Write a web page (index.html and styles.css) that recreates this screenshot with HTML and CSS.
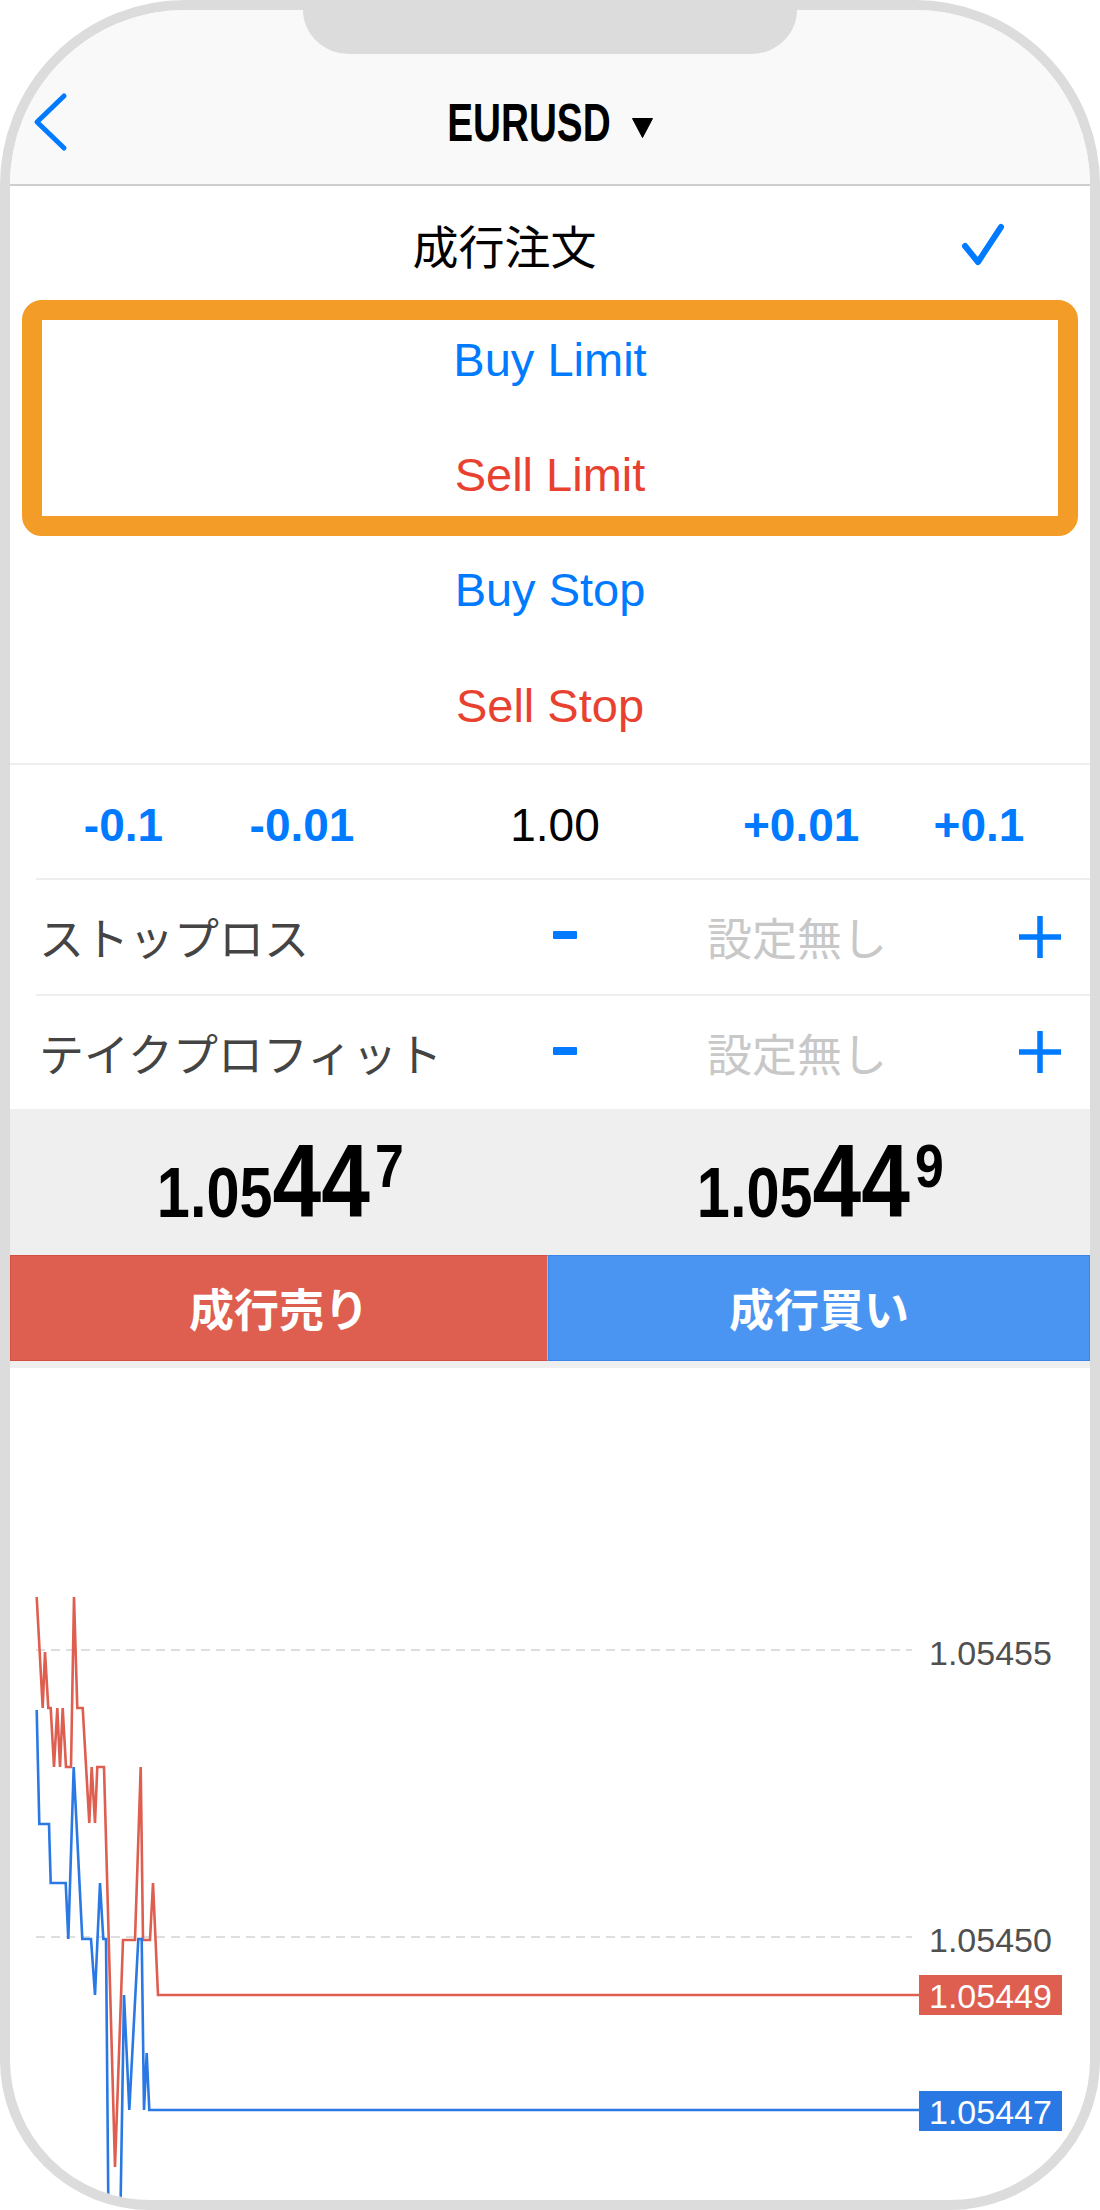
FILE: index.html
```html
<!DOCTYPE html>
<html lang="ja">
<head>
<meta charset="utf-8">
<title>EURUSD 注文</title>
<link rel="stylesheet" href="styles.css">
</head>
<body>
<div class="phone">
  <div class="notch"></div>
  <header class="nav">
    <span class="back">
      <svg width="36" height="60" viewBox="0 0 36 60"><polyline points="32,4 5,30 32,56" fill="none" stroke="#007aff" stroke-width="5" stroke-linecap="round" stroke-linejoin="round"/></svg>
    </span>
    <div class="title">
      <span class="symbol">EURUSD</span>
      <svg class="caret" width="21" height="20" viewBox="0 0 21 20"><polygon points="0.5,0.5 20.5,0.5 10.5,19.5" fill="#000" stroke="#000" stroke-width="1" stroke-linejoin="round"/></svg>
    </div>
    <span></span>
  </header>

  <div class="types">
    <div class="type-row market">
      <span class="market-label">成行注文</span>
      <svg class="check" width="52" height="52" viewBox="0 0 52 52"><polyline points="7,28 20,44 43,9" fill="none" stroke="#007aff" stroke-width="6" stroke-linecap="round" stroke-linejoin="round"/></svg>
    </div>
    <div class="type-row buy">Buy Limit</div>
    <div class="type-row sell">Sell Limit</div>
    <div class="type-row buy">Buy Stop</div>
    <div class="type-row sell">Sell Stop</div>
    <div class="highlight"></div>
  </div>

  <div class="lots">
    <span class="step">-0.1</span>
    <span class="step">-0.01</span>
    <span class="lot-value">1.00</span>
    <span class="step">+0.01</span>
    <span class="step last">+0.1</span>
  </div>

  <div class="level">
    <span class="level-name">ストップロス</span>
    <span class="minus" aria-label="-"></span>
    <span class="unset">設定無し</span>
    <svg class="plus" width="42" height="42" viewBox="0 0 42 42"><path d="M21 0V42M0 21H42" stroke="#007aff" stroke-width="5.5"/></svg>
  </div>
  <div class="level second">
    <span class="level-name">テイクプロフィット</span>
    <span class="minus" aria-label="-"></span>
    <span class="unset">設定無し</span>
    <svg class="plus" width="42" height="42" viewBox="0 0 42 42"><path d="M21 0V42M0 21H42" stroke="#007aff" stroke-width="5.5"/></svg>
  </div>

  <div class="quotes">
    <div class="quote"><span class="price"><span class="q-small">1.05</span><span class="q-big">44</span><span class="q-sup">7</span></span></div>
    <div class="quote"><span class="price"><span class="q-small">1.05</span><span class="q-big">44</span><span class="q-sup">9</span></span></div>
  </div>

  <div class="actions">
    <button class="sell-btn">成行売り</button>
    <button class="buy-btn">成行買い</button>
  </div>

  <div class="chart">
    <svg width="1080" height="832" viewBox="10 1368 1080 832">
      <g stroke="#dedede" stroke-width="2" stroke-dasharray="9 6">
        <line x1="36" y1="1650" x2="912" y2="1650"/>
        <line x1="36" y1="1937" x2="912" y2="1937"/>
      </g>
      <text class="axis" x="929" y="1665">1.05455</text>
      <text class="axis" x="929" y="1952">1.05450</text>
      <polyline fill="none" stroke="#de5e50" stroke-width="2.6" stroke-linejoin="miter"
        points="36.7,1597 42.7,1708 45,1652 48.3,1708 50.7,1708 54,1767 57.3,1708 60,1767 62.7,1708 66,1767 71,1767 74,1597 77.3,1708 82.7,1708 89.3,1823 91.7,1767 95,1823 97.3,1767 104,1767 115,2167 123,1940 135,1940 140.7,1767 143,1940 150,1940 153,1883 158,1995 920,1995"/>
      <polyline fill="none" stroke="#2a78e4" stroke-width="2.6" stroke-linejoin="miter"
        points="36.7,1710 39.3,1824 49,1824 50.7,1883 65.7,1883 68.3,1939 73.7,1767 82.3,1939 91,1939 95,1995 100,1883 103.3,1939 106,1939 109,2281 119.3,2281 124,1995 129.3,2110 138.3,1939 141.7,1939 144,2110 146.7,2053 149.3,2110 920,2110"/>
      <rect x="919" y="1975" width="143" height="40" fill="#de5e50"/>
      <text class="tag" x="929" y="2007.5">1.05449</text>
      <rect x="919" y="2091" width="143" height="40" fill="#2a78e4"/>
      <text class="tag" x="929" y="2123.5">1.05447</text>
    </svg>
  </div>
</div>
</body>
</html>
```

FILE: styles.css
```css
* {
  box-sizing: border-box;
}

body {
  margin: 0;
  background: #ffffff;
  font-family: "Liberation Sans", "Noto Sans CJK JP", sans-serif;
}

.phone {
  position: relative;
  width: 1100px;
  height: 2210px;
  border: 10px solid #dcdcdc;
  border-radius: 185px 185px 150px 150px;
  overflow: hidden;
  display: flex;
  flex-direction: column;
  background: #ffffff;
}

.notch {
  position: absolute;
  top: -1px;
  left: 293px;
  width: 494px;
  height: 45px;
  background: #dcdcdc;
  border-radius: 0 0 46px 46px / 0 0 44px 44px;
  z-index: 3;
}

/* header */
.nav {
  flex: none;
  height: 176px;
  padding-top: 50px;
  background: #f9f9f9;
  border-bottom: 2px solid #cecece;
  display: grid;
  grid-template-columns: 1fr auto 1fr;
  align-items: center;
}

.back {
  display: flex;
  padding-left: 22px;
}

.title {
  display: flex;
  align-items: center;
  font-family: "Liberation Sans", sans-serif;
  font-weight: 700;
  font-size: 53px;
  line-height: 1;
  color: #000000;
}

.symbol {
  display: inline-block;
  transform: scaleX(0.73);
  margin: 0 -30px;
}

.caret {
  margin-left: 21px;
  margin-top: 12px;
}

/* order types */
.types {
  position: relative;
  flex: none;
  border-bottom: 2px solid #eeeeee;
}

.type-row {
  height: 115.4px;
  display: flex;
  align-items: center;
  justify-content: center;
  font-size: 47px;
}

.type-row.market {
  display: grid;
  grid-template-columns: 1fr auto;
  align-items: center;
  padding-left: 41px;
  font-family: "Noto Sans CJK JP", sans-serif;
  font-size: 46px;
  color: #000000;
}

.market-label {
  text-align: center;
}

.check {
  display: block;
  margin-right: 80px;
}

.buy {
  color: #007aff;
}

.sell {
  color: #e9412f;
}

.highlight {
  position: absolute;
  left: 12px;
  top: 114px;
  width: 1056px;
  height: 236px;
  border: 20px solid #f39c27;
  border-radius: 20px;
  pointer-events: none;
}

/* lots */
.lots {
  flex: none;
  height: 113px;
  padding-top: 7px;
  display: grid;
  grid-template-columns: 227px 130px 376px 114px 233px;
  align-items: center;
  text-align: center;
  font-size: 46px;
  color: #000000;
}

.step {
  color: #007aff;
  font-weight: 700;
}

.step.last {
  padding-left: 11px;
}

/* SL / TP */
.level {
  flex: none;
  height: 116px;
  margin-left: 26px;
  border-top: 2px solid #eeeeee;
  display: grid;
  grid-template-columns: 479px 100px 364px 1fr;
  align-items: center;
  font-family: "Noto Sans CJK JP", sans-serif;
  font-size: 45px;
}

.level.second {
  height: 115px;
}

.level-name {
  padding-left: 3px;
  color: #444444;
}

.minus {
  justify-self: center;
  width: 24px;
  height: 8px;
  margin-top: -3px;
  background: #007aff;
  border-radius: 1px;
}

.unset {
  text-align: center;
  color: #c8c8c8;
}

.plus {
  display: block;
  margin-left: 40px;
}

/* quotes */
.quotes {
  flex: none;
  height: 146px;
  background: #efefef;
  display: grid;
  grid-template-columns: 1fr 1fr;
  align-items: center;
  text-align: center;
  font-family: "Liberation Sans", sans-serif;
  font-weight: 700;
  line-height: 1;
  color: #000000;
}

.quote {
  font-size: 103px;
}

.price {
  display: inline-block;
  transform: scaleX(0.85);
}

.q-small {
  font-size: 70px;
}

.q-sup {
  font-size: 61px;
  vertical-align: 30px;
  margin-left: 6px;
}

/* action buttons */
.actions {
  flex: none;
  height: 106px;
  display: grid;
  grid-template-columns: 538px 1fr;
}

.actions button {
  margin: 0;
  padding: 0;
  font-family: "Noto Sans CJK JP", sans-serif;
  font-weight: 700;
  font-size: 45px;
  color: #ffffff;
}

.sell-btn {
  background: #de5e50;
  border: 1px solid #d24f41;
  border-right-color: #f0a79e;
}

.buy-btn {
  background: #4a94f2;
  border: 1px solid #3a85ea;
}

/* chart */
.chart {
  flex: 1;
  border-top: 7px solid #efefef;
}

.chart svg {
  display: block;
}

.axis {
  font-family: "Liberation Sans", sans-serif;
  font-size: 34px;
  fill: #505050;
}

.tag {
  font-family: "Liberation Sans", sans-serif;
  font-size: 34px;
  fill: #ffffff;
}
```
